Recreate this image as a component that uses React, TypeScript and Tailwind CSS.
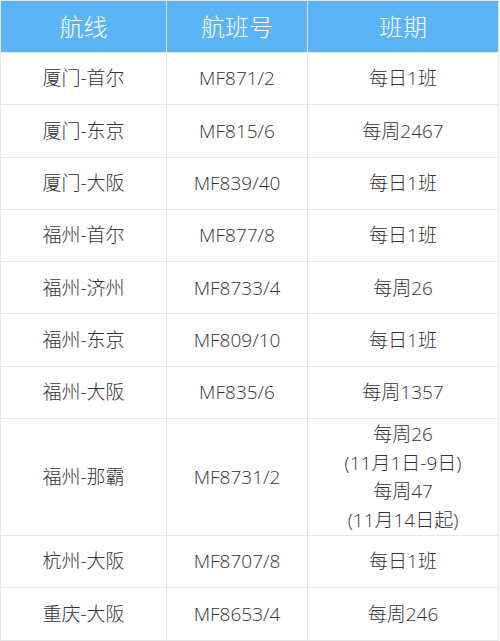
import React from "react";

const rows: { route: string; flight: string; schedule: string[] }[] = [
  { route: "厦门-首尔", flight: "MF871/2", schedule: ["每日1班"] },
  { route: "厦门-东京", flight: "MF815/6", schedule: ["每周2467"] },
  { route: "厦门-大阪", flight: "MF839/40", schedule: ["每日1班"] },
  { route: "福州-首尔", flight: "MF877/8", schedule: ["每日1班"] },
  { route: "福州-济州", flight: "MF8733/4", schedule: ["每周26"] },
  { route: "福州-东京", flight: "MF809/10", schedule: ["每日1班"] },
  { route: "福州-大阪", flight: "MF835/6", schedule: ["每周1357"] },
  {
    route: "福州-那霸",
    flight: "MF8731/2",
    schedule: ["每周26", "(11月1日-9日)", "每周47", "(11月14日起)"],
  },
  { route: "杭州-大阪", flight: "MF8707/8", schedule: ["每日1班"] },
  { route: "重庆-大阪", flight: "MF8653/4", schedule: ["每周246"] },
];

const font = "font-['Open_Sans','Noto_Sans_CJK_SC',sans-serif]";
const cell = "bg-white text-[#333] text-[19px] font-light flex items-center justify-center";

export default function App() {
  return (
    <div className="w-[500px] h-[641px] bg-white">
      <div
        className={`w-[499px] grid grid-cols-[165px_140px_190px] gap-px p-px bg-[#e6e6e6] ${font}`}
        style={{
          gridTemplateRows: `51px repeat(7, 51.3px) 116px repeat(2, 51.3px)`,
        }}
      >
        {["航线", "航班号", "班期"].map((h) => (
          <div
            key={h}
            className="bg-[#5ab4f6] text-white text-[24px] font-light flex items-center justify-center"
          >
            {h}
          </div>
        ))}
        {rows.map((r) => (
          <React.Fragment key={r.flight}>
            <div className={cell}>{r.route}</div>
            <div className={cell}>{r.flight}</div>
            <div className={`${cell} flex-col leading-[28.5px]`}>
              {r.schedule.map((s) => (
                <span key={s}>{s}</span>
              ))}
            </div>
          </React.Fragment>
        ))}
      </div>
    </div>
  );
}
